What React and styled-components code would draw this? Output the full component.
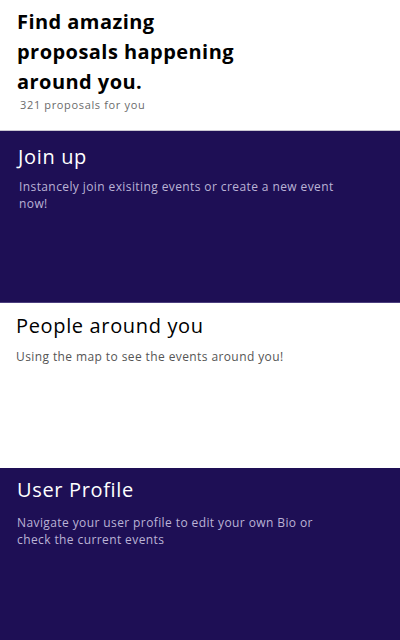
import React from "react";
import styled, { createGlobalStyle } from "styled-components";

const Global = createGlobalStyle`
  html, body { margin: 0; padding: 0; background: #ffffff; }
  body { font-family: "Open Sans", "Noto Sans", sans-serif; }
  * { box-sizing: border-box; }
`;

const Page = styled.div`
  width: 400px;
  height: 640px;
  overflow: hidden;
  display: flex;
  flex-direction: column;
`;

const Header = styled.header`
  height: 130px;
  padding: 7px 16px 0 17px;
`;

const Headline = styled.h1`
  margin: 0;
  font-size: 20px;
  line-height: 30px;
  font-weight: 700;
  letter-spacing: 0.45px;
  color: #000;
  max-width: 235px;
`;

const Count = styled.p`
  margin: 0 0 0 3px;
  font-size: 11px;
  line-height: 16px;
  letter-spacing: 0.65px;
  color: #6b6b6b;
`;

const Card = styled.section`
  height: ${(p) => p.$h}px;
  padding: ${(p) => p.$pad};
  background: ${(p) => (p.$dark ? "#1e0f55" : "#ffffff")};
  border-top: ${(p) => (p.$topLine ? "1px solid #c9c6d1" : "none")};
  border-bottom: ${(p) => (p.$bottomLine ? "1px solid #4c3f7e" : "none")};
`;

const CardTitle = styled.h2`
  margin: 0;
  font-size: 20px;
  line-height: 28px;
  font-weight: 400;
  letter-spacing: 0.65px;
  color: ${(p) => (p.$dark ? "#ffffff" : "#000000")};
`;

const CardText = styled.p`
  margin: ${(p) => p.$gap}px 0 0 ${(p) => p.$indent || 0}px;
  max-width: 320px;
  font-size: 12px;
  line-height: 17px;
  letter-spacing: 0.4px;
  color: ${(p) => (p.$dark ? "#bbb3d6" : "#555555")};
`;

export default function App() {
  return (
    <Page>
      <Global />
      <Header>
        <Headline>Find amazing proposals happening around you.</Headline>
        <Count>321 proposals for you</Count>
      </Header>
      <Card $dark $h={173} $pad="12px 16px 0 18px" $topLine $bottomLine>
        <CardTitle $dark>Join up</CardTitle>
        <CardText $dark $gap={7} $indent={1}>
          Instancely join exisiting events or create a new event now!
        </CardText>
      </Card>
      <Card $h={165} $pad="9px 16px 0 16px">
        <CardTitle>People around you</CardTitle>
        <CardText $gap={8}>Using the map to see the events around you!</CardText>
      </Card>
      <Card $dark $h={172} $pad="8px 16px 0 17px">
        <CardTitle $dark>User Profile</CardTitle>
        <CardText $dark $gap={10}>
          Navigate your user profile to edit your own Bio or check the current
          events
        </CardText>
      </Card>
    </Page>
  );
}
